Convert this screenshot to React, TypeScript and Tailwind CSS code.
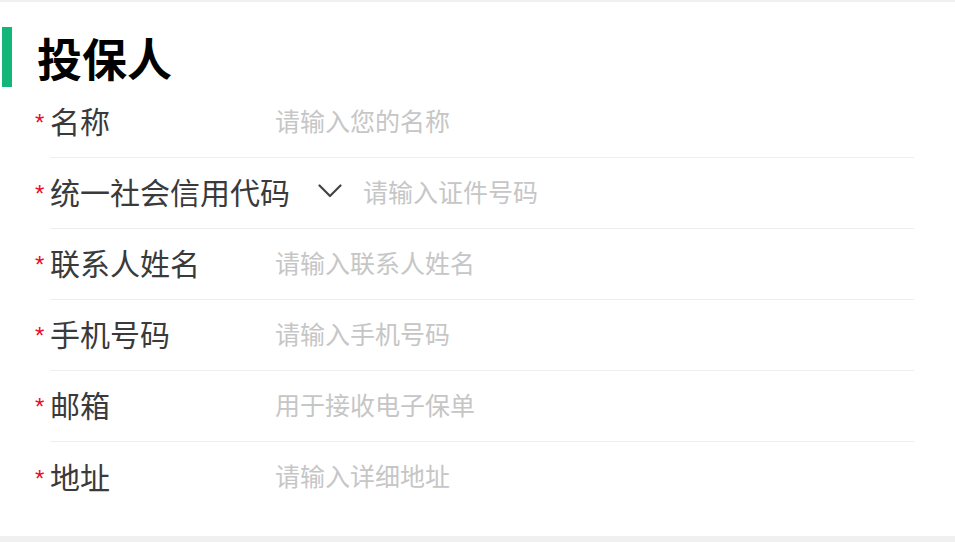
import React from "react";

const rows: { label: string; placeholder: string; select?: boolean }[] = [
  { label: "名称", placeholder: "请输入您的名称" },
  { label: "统一社会信用代码", placeholder: "请输入证件号码", select: true },
  { label: "联系人姓名", placeholder: "请输入联系人姓名" },
  { label: "手机号码", placeholder: "请输入手机号码" },
  { label: "邮箱", placeholder: "用于接收电子保单" },
  { label: "地址", placeholder: "请输入详细地址" },
];

export default function App() {
  return (
    <div
      className="w-[955px] h-[542px] bg-[#f0f0f0] pt-[2px] pb-[6px]"
      style={{ fontFamily: '"Noto Sans CJK SC", "Noto Sans", sans-serif' }}
    >
      <div className="h-full bg-white pt-[25px]">
        <div className="flex items-center h-[60px]">
          <div className="ml-[2px] w-[10px] h-[60px] bg-[#12b67a]" />
          <div className="ml-[25px] text-[45px] leading-none font-bold text-black">投保人</div>
        </div>
        <div className="ml-[50px] mr-[41px]">
          {rows.map((r, i) => (
            <div
              key={r.label}
              className={
                "flex items-center h-[71px] pb-[4px] " +
                (i < rows.length - 1 ? "border-b border-[#eeeeee]" : "")
              }
            >
              <span className="-ml-[15px] w-[15px] font-['Liberation_Sans',sans-serif] text-[24px] leading-none text-[#ee0a24] mt-[6px]">*</span>
              {r.select ? (
                <>
                  <span className="text-[30px] leading-none text-[#3a3a3a] whitespace-nowrap">{r.label}</span>
                  <svg
                    className="ml-[28px]"
                    width="24"
                    height="14"
                    viewBox="0 0 24 14"
                    fill="none"
                    stroke="#444"
                    strokeWidth="2.2"
                    strokeLinecap="round"
                    strokeLinejoin="round"
                  >
                    <path d="M1.5 1.5 L12 12 L22.5 1.5" />
                  </svg>
                  <span className="ml-[21px] text-[25px] leading-none text-[#c6c6c6] whitespace-nowrap">
                    {r.placeholder}
                  </span>
                </>
              ) : (
                <>
                  <span className="w-[225px] text-[30px] leading-none text-[#3a3a3a] whitespace-nowrap">{r.label}</span>
                  <span className="text-[25px] leading-none text-[#c6c6c6] whitespace-nowrap">{r.placeholder}</span>
                </>
              )}
            </div>
          ))}
        </div>
      </div>
    </div>
  );
}
